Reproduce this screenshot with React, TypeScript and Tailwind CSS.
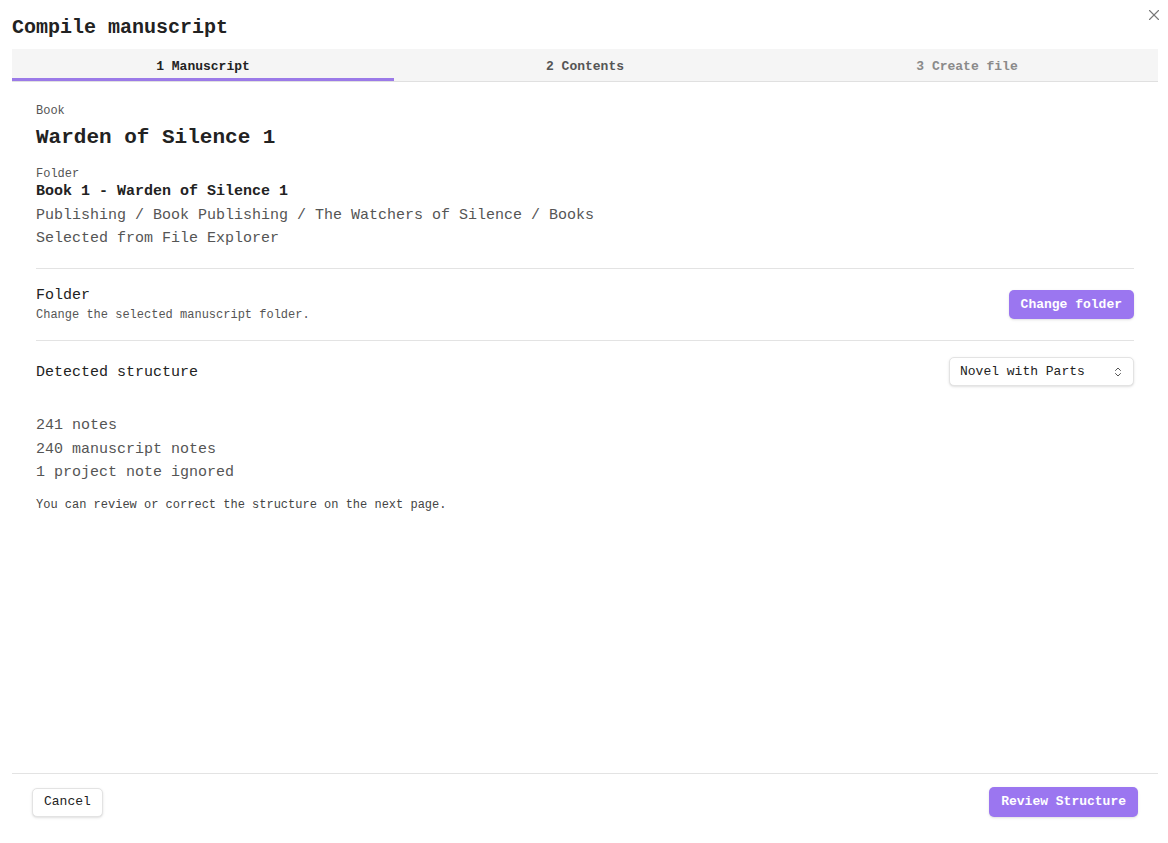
import { X, ChevronsUpDown } from 'lucide-react';

const mono = { fontFamily: '"Liberation Mono", "DejaVu Sans Mono", monospace' };

export default function App() {
  return (
    <main
      style={mono}
      className="relative flex h-[843px] w-[1168px] flex-col bg-white pl-3 pr-[10px] text-[#222222]"
    >
      <button className="absolute right-[5px] top-[6px] text-[#777777]">
        <X size={18} strokeWidth={1.5} />
      </button>

      <h1 className="pt-[15px] text-[20px] font-bold leading-[26px]">Compile manuscript</h1>

      <div className="mt-[8px] grid h-[33px] grid-cols-3 border-b border-[#e0e0e0] bg-[#f5f5f5] text-[13px] font-bold">
        <div className="flex items-center justify-center border-b-[3px] border-[#9b7ae8] pt-[7px] text-[#222222]">
          1 Manuscript
        </div>
        <div className="flex items-center justify-center pt-[4px] text-[#555555]">2 Contents</div>
        <div className="flex items-center justify-center pt-[4px] text-[#8a8a8a]">3 Create file</div>
      </div>

      <section className="flex-1 px-6 pt-[21px]">
        <div className="text-[12px] leading-[16px] text-[#555555]">Book</div>
        <div className="mt-[5px] text-[21px] font-bold leading-[28px]">Warden of Silence 1</div>

        <div className="mt-[14px] text-[12px] leading-[16px] text-[#555555]">Folder</div>
        <div className="text-[15px] font-bold leading-[19px]">Book 1 - Warden of Silence 1</div>
        <div className="mt-[3px] text-[15px] leading-[23px] text-[#555555]">
          Publishing / Book Publishing / The Watchers of Silence / Books
        </div>
        <div className="text-[15px] leading-[23px] text-[#555555]">Selected from File Explorer</div>

        <div className="mt-[18px] flex items-center justify-between border-t border-[#e3e3e3] py-[17px]">
          <div>
            <div className="text-[15px] leading-[20px]">Folder</div>
            <div className="mt-[1px] text-[12px] leading-[16px] text-[#555555]">
              Change the selected manuscript folder.
            </div>
          </div>
          <button className="h-[29px] rounded-[5px] bg-[#9b76f0] px-3 text-[13px] font-bold text-white shadow-sm">
            Change folder
          </button>
        </div>

        <div className="flex items-center justify-between border-t border-[#e3e3e3] py-[16px]">
          <div className="pt-[2px] text-[15px] leading-[20px]">Detected structure</div>
          <button className="flex h-[29px] w-[185px] items-center justify-between rounded-[5px] border border-[#e3e3e3] bg-white pl-[10px] pr-[9px] text-[13px] shadow-sm">
            Novel with Parts
            <ChevronsUpDown size={12} className="text-[#555555]" />
          </button>
        </div>

        <div className="mt-[12px] text-[15px] leading-[23.5px] text-[#555555]">
          <div>241 notes</div>
          <div>240 manuscript notes</div>
          <div>1 project note ignored</div>
        </div>
        <p className="mt-[12px] text-[12px] leading-[16px] text-[#444444]">
          You can review or correct the structure on the next page.
        </p>
      </section>

      <footer className="flex items-center justify-between border-t border-[#e3e3e3] pb-[26px] pl-5 pr-5 pt-[13px]">
        <button className="h-[29px] rounded-[5px] border border-[#e3e3e3] bg-white px-[11px] text-[13px] shadow-sm">
          Cancel
        </button>
        <button className="h-[30px] rounded-[5px] bg-[#9b76f0] px-3 text-[13px] font-bold text-white shadow-sm">
          Review Structure
        </button>
      </footer>
    </main>
  );
}
